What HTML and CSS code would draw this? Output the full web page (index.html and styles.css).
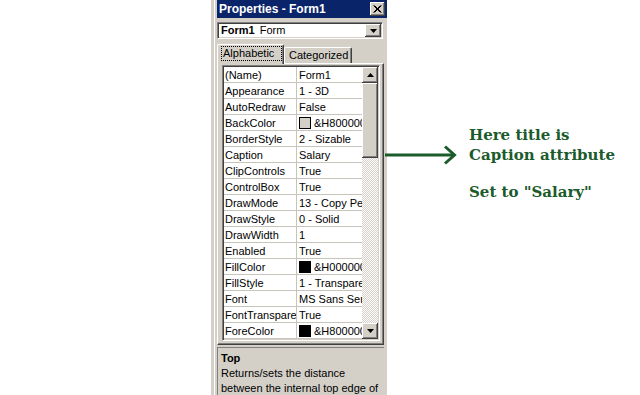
FILE: index.html
```html
<!DOCTYPE html>
<html>
<head>
<meta charset="utf-8">
<link rel="stylesheet" href="styles.css">
</head>
<body>
<div class="page">
  <div class="window">
    <div class="titlebar">
      <span class="title">Properties - Form1</span>
      <span class="btn close"><svg width="9" height="8" viewBox="0 0 9 8"><path d="M0.5 0.5 L7.5 7.5 M1.5 0.5 L8.5 7.5 M7.5 0.5 L0.5 7.5 M8.5 0.5 L1.5 7.5" stroke="#000" stroke-width="1" fill="none"/></svg></span>
    </div>
    <div class="combo">
      <span class="combo-text"><b>Form1</b> Form</span>
      <span class="btn drop"><svg width="7" height="4" viewBox="0 0 7 4"><path d="M0 0 H7 L3.5 4 Z" fill="#000"/></svg></span>
    </div>
    <div class="tabs">
      <div class="tab active"><span class="focus">Alphabetic</span></div>
      <div class="tab">Categorized</div>
    </div>
    <div class="panel">
      <div class="grid">
        <div class="rows">
          <div class="row"><div class="name">(Name)</div><div class="value">Form1</div></div>
          <div class="row"><div class="name">Appearance</div><div class="value">1 - 3D</div></div>
          <div class="row"><div class="name">AutoRedraw</div><div class="value">False</div></div>
          <div class="row"><div class="name">BackColor</div><div class="value"><span class="swatch light"></span>&amp;H8000000F&amp;</div></div>
          <div class="row"><div class="name">BorderStyle</div><div class="value">2 - Sizable</div></div>
          <div class="row"><div class="name">Caption</div><div class="value">Salary</div></div>
          <div class="row"><div class="name">ClipControls</div><div class="value">True</div></div>
          <div class="row"><div class="name">ControlBox</div><div class="value">True</div></div>
          <div class="row"><div class="name">DrawMode</div><div class="value">13 - Copy Pen</div></div>
          <div class="row"><div class="name">DrawStyle</div><div class="value">0 - Solid</div></div>
          <div class="row"><div class="name">DrawWidth</div><div class="value">1</div></div>
          <div class="row"><div class="name">Enabled</div><div class="value">True</div></div>
          <div class="row"><div class="name">FillColor</div><div class="value"><span class="swatch dark"></span>&amp;H00000000&amp;</div></div>
          <div class="row"><div class="name">FillStyle</div><div class="value">1 - Transparent</div></div>
          <div class="row"><div class="name">Font</div><div class="value">MS Sans Serif</div></div>
          <div class="row"><div class="name">FontTransparent</div><div class="value">True</div></div>
          <div class="row"><div class="name">ForeColor</div><div class="value"><span class="swatch dark"></span>&amp;H80000012&amp;</div></div>
        </div>
        <div class="scrollbar">
          <div class="btn sbtn"><svg width="7" height="4" viewBox="0 0 7 4"><path d="M3.5 0 L7 4 H0 Z" fill="#000"/></svg></div>
          <div class="btn thumb"></div>
          <div class="track"></div>
          <div class="btn sbtn"><svg width="7" height="4" viewBox="0 0 7 4"><path d="M0 0 H7 L3.5 4 Z" fill="#000"/></svg></div>
        </div>
      </div>
    </div>
    <div class="desc">
      <div class="desc-title">Top</div>
      <div class="desc-text">Returns/sets the distance between the internal top edge of an object and the top edge of its container.</div>
    </div>
  </div>
  <svg class="arrow" width="84" height="20" viewBox="0 0 84 20">
    <path d="M0 10 H69" stroke="#1b5b2b" stroke-width="3" fill="none"/>
    <path d="M60 1.5 L69.5 10 L60 18.5" stroke="#1b5b2b" stroke-width="3" fill="none"/>
  </svg>
  <div class="note">
    <div class="note-line">Here title is</div>
    <div class="note-line">Caption attribute</div>
    <div class="note-line gap">Set to "Salary"</div>
  </div>
</div>
</body>
</html>
```

FILE: styles.css
```css
* {
  box-sizing: border-box;
  margin: 0;
  padding: 0;
}

body {
  margin: 0;
  width: 640px;
  height: 395px;
  overflow: hidden;
  background: #fff;
  font-family: "Liberation Sans", Arial, sans-serif;
  font-size: 11px;
  color: #000;
}

.page {
  display: flex;
  align-items: flex-start;
}

.window {
  margin-left: 211px;
  width: 176px;
  height: 395px;
  padding: 0 3px 0 6px;
  background: linear-gradient(to right, #d4d0c8 3px, #fff 3px, #fff 4px, #d4d0c8 4px);
  display: flex;
  flex-direction: column;
  flex-shrink: 0;
}

.btn {
  background: #d4d0c8;
  box-shadow: inset -1px -1px #404040, inset 1px 1px #fff, inset -2px -2px #808080;
  display: flex;
  align-items: center;
  justify-content: center;
}

.titlebar {
  height: 18px;
  margin-right: -3px;
  background: #0a246a;
  color: #fff;
  display: flex;
  align-items: center;
  justify-content: space-between;
  padding: 0 2px 0 2px;
}

.title {
  font-weight: bold;
  font-size: 12px;
}

.close {
  width: 15px;
  height: 14px;
  margin-top: -1px;
}

.combo {
  margin-top: 4px;
  height: 17px;
  width: 166px;
  background: #fff;
  border: 1px solid;
  border-color: #808080 #fff #fff #808080;
  box-shadow: inset 1px 1px #404040, inset -1px -1px #d4d0c8;
  display: flex;
  align-items: center;
  justify-content: space-between;
  padding: 1px 1px 1px 3px;
}

.combo-text {
  line-height: 13px;
  white-space: nowrap;
}

.combo-text b {
  margin-right: 2px;
}

.drop {
  width: 16px;
  height: 13px;
}

.tabs {
  margin-top: 5px;
  height: 19px;
  display: flex;
  align-items: flex-end;
  position: relative;
  z-index: 1;
}

.tab {
  height: 16px;
  padding: 0 6px;
  border-top: 1px solid #fff;
  border-left: 1px solid #fff;
  border-right: 1px solid #404040;
  box-shadow: inset -1px 0 #808080;
  border-radius: 2px 2px 0 0;
  line-height: 14px;
  background: #d4d0c8;
  white-space: nowrap;
}

.tab.active {
  height: 20px;
  width: 67px;
  margin-bottom: -1px;
  padding: 1px 1px 0 3px;
}

.tab:not(.active) {
  width: 68px;
  padding-left: 4px;
}

.focus {
  display: block;
  height: 15px;
  border: 1px dotted #000;
  padding-left: 1px;
  line-height: 13px;
}

.panel {
  width: 167px;
  height: 282px;
  border-top: 1px solid #fff;
  border-left: 1px solid #fff;
  border-right: 1px solid #404040;
  border-bottom: 1px solid #404040;
  box-shadow: inset -1px -1px #808080;
  padding: 1px 2px 2px 4px;
}

.grid {
  width: 158px;
  height: 276px;
  border: 1px solid;
  border-color: #808080 #fff #fff #808080;
  box-shadow: inset 1px 1px #404040, inset -1px -1px #d4d0c8;
  padding: 1px;
  display: flex;
  background: #fff;
}

.rows {
  width: 138px;
  display: flex;
  flex-direction: column;
}

.row {
  height: 16px;
  display: flex;
  border-bottom: 1px solid #c8c4bc;
}

.name {
  width: 73px;
  border-right: 1px solid #c8c4bc;
  padding-left: 1px;
  line-height: 16px;
  overflow: hidden;
  white-space: nowrap;
}

.value {
  width: 65px;
  padding-left: 2px;
  line-height: 16px;
  overflow: hidden;
  white-space: nowrap;
  display: flex;
  align-items: center;
}

.swatch {
  flex-shrink: 0;
  width: 12px;
  height: 12px;
  border: 1px solid #000;
  margin-right: 3px;
}

.swatch.light {
  background: #d4d0c8;
}

.swatch.dark {
  background: #000;
}

.scrollbar {
  width: 16px;
  display: flex;
  flex-direction: column;
}

.sbtn {
  height: 16px;
  flex-shrink: 0;
}

.thumb {
  height: 75px;
  flex-shrink: 0;
}

.track {
  flex: 1;
  background: repeating-conic-gradient(#d4d0c8 0 25%, #fff 0 50%) 0 0 / 2px 2px;
}

.desc {
  margin-top: 2px;
  flex: 1;
  width: 167px;
  border-top: 1px solid #808080;
  border-left: 1px solid #808080;
  padding: 3px 2px 0 3px;
  line-height: 15px;
  overflow: hidden;
}

.desc-title {
  font-weight: bold;
  font-size: 11px;
}

.arrow {
  margin-left: -2px;
  margin-top: 145px;
  flex-shrink: 0;
}

.note {
  margin-top: 125px;
  color: #1b5b2b;
  font-family: "DejaVu Serif", serif;
  font-weight: bold;
  font-size: 15px;
  line-height: 20px;
  white-space: nowrap;
}

.note-line.gap {
  margin-top: 17px;
}
```
